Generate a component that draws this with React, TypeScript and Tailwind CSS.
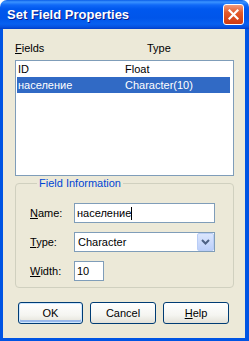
export default function App() {
  return (
    <div className="w-[249px] h-[341px] flex flex-col font-['Liberation_Sans',Arial,sans-serif] text-[11px] leading-[13px] text-black select-none">
      {/* Title bar */}
      <div className="h-[29px] shrink-0 rounded-t-[7px] bg-[linear-gradient(to_bottom,#0a5de8_0px,#3a93ff_2px,#1069f7_5px,#0058ee_9px,#0055ea_18px,#0760f0_24px,#0551e0_27px,#003dc8_29px)] flex items-center pl-[7px] pr-[5px]">
        <span className="flex-1 font-bold text-[13px] leading-[16px] text-white [text-shadow:1px_1px_0_#0a1a8a]">
          Set Field Properties
        </span>
        <div className="w-[21px] h-[21px] rounded-[3px] border border-white bg-[linear-gradient(to_bottom,#f19a7c,#e35a2a_40%,#cf3a12)] flex items-center justify-center">
          <svg width="11" height="11" viewBox="0 0 11 11">
            <path d="M1.5 1.5 L9.5 9.5 M9.5 1.5 L1.5 9.5" stroke="white" strokeWidth="2.2" strokeLinecap="square" />
          </svg>
        </div>
      </div>

      {/* Client area */}
      <div className="flex-1 flex flex-col border-l-[3px] border-r-[4px] border-b-[3px] border-[#0054e3] bg-[#ece9d8] px-[12px]">
        <div className="flex mt-[13px] h-[13px]">
          <span className="w-[132px]">
            <u>F</u>ields
          </span>
          <span>Type</span>
        </div>

        {/* List */}
        <div className="mt-[5px] w-[219px] h-[116px] border border-[#7f9db9] bg-white flex flex-col">
          <div className="flex h-[16px] items-center px-[1px]">
            <span className="w-[108px] pl-[1px]">ID</span>
            <span>Float</span>
          </div>
          <div className="flex h-[16px] items-center ml-[1px] w-[213px] bg-[#316ac5] text-white">
            <span className="w-[108px] pl-[1px]">население</span>
            <span>Character(10)</span>
          </div>
        </div>

        {/* Group box */}
        <fieldset className="mt-[1px] w-[219px] border border-[#d0d0bf] rounded-[4px] pl-[14px] pr-[18px] pb-[6px] pt-[13px] flex flex-col gap-[9px]">
          <legend className="ml-[7px] px-[2px] text-[#0046d5]">Field Information</legend>
          <div className="flex items-center h-[20px]">
            <span className="w-[44px]">
              <u>N</u>ame:
            </span>
            <div className="w-[141px] h-[20px] border border-[#7f9db9] bg-white flex items-center pl-[2px]">
              <span>население</span>
              <span className="inline-block w-[1px] h-[13px] bg-black"></span>
            </div>
          </div>
          <div className="flex items-center h-[20px]">
            <span className="w-[44px]">
              <u>T</u>ype:
            </span>
            <div className="w-[141px] h-[20px] border border-[#7f9db9] bg-white flex items-center pl-[3px]">
              <span className="flex-1">Character</span>
              <div className="w-[17px] h-[18px] rounded-[2px] border border-[#b9cdf6] bg-[linear-gradient(to_bottom,#dbe6fd,#bccffa)] flex items-center justify-center">
                <svg width="9" height="6" viewBox="0 0 9 6">
                  <path d="M1 1 L4.5 4.5 L8 1" stroke="#4d6185" strokeWidth="2" fill="none" />
                </svg>
              </div>
            </div>
          </div>
          <div className="flex items-center h-[20px]">
            <span className="w-[44px]">
              <u>W</u>idth:
            </span>
            <div className="w-[30px] h-[20px] border border-[#7f9db9] bg-white flex items-center pl-[2px]">
              10
            </div>
          </div>
        </fieldset>

        {/* Buttons */}
        <div className="flex gap-[7px] mt-[14px] pl-[3px]">
          <div className="w-[65px] h-[22px] rounded-[3px] border border-[#003c74] bg-[linear-gradient(to_bottom,#ffffff,#f5f5f1_60%,#e3e1d8)] shadow-[inset_0_0_0_1px_#cee7ff,inset_0_-2px_0_1px_#98b8ea] flex items-center justify-center">
            OK
          </div>
          <div className="w-[66px] h-[22px] rounded-[3px] border border-[#003c74] bg-[linear-gradient(to_bottom,#ffffff,#f5f5f1_60%,#e3e1d8)] flex items-center justify-center">
            Cancel
          </div>
          <div className="w-[66px] h-[22px] rounded-[3px] border border-[#003c74] bg-[linear-gradient(to_bottom,#ffffff,#f5f5f1_60%,#e3e1d8)] flex items-center justify-center">
            <span>
              <u>H</u>elp
            </span>
          </div>
        </div>
      </div>
    </div>
  );
}
